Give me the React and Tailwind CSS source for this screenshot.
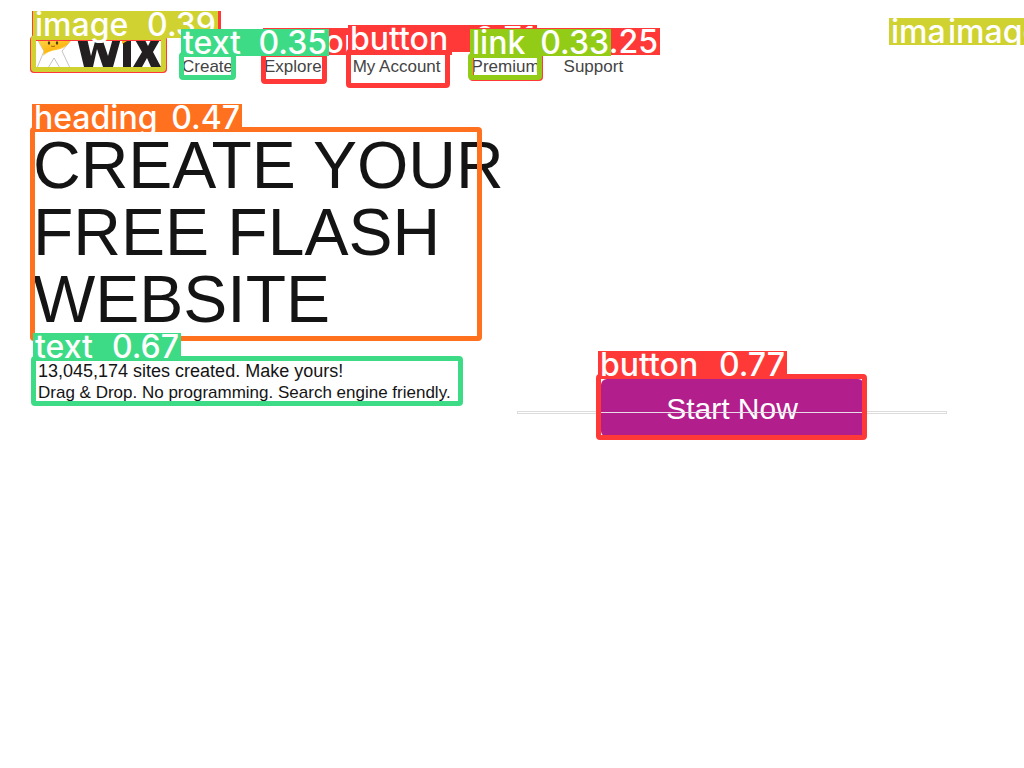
const tones = {
  red: { box: 'border-[#ff3838]', tag: 'bg-[#ff3838]' },
  olive: { box: 'border-[#cfd231]', tag: 'bg-[#cfd231]' },
  mint: { box: 'border-[#3ddb86]', tag: 'bg-[#3ddb86]' },
  lime: { box: 'border-[#92cc17]', tag: 'bg-[#92cc17]' },
  orange: { box: 'border-[#ff701f]', tag: 'bg-[#ff701f]' },
};

const detections = [
  { tone: 'red', box: 'left-[30px] top-[36px] w-[137px] h-[37px]', tag: 'left-[32px] top-[11px] w-[189px]' },
  { name: 'image', score: '0.39', tone: 'olive', box: 'left-[31px] top-[35px] w-[135px] h-[37px]', tag: 'left-[33px] top-[11px] w-[185px]' },
  { name: 'button', tone: 'red', box: 'left-[261px] top-[52px] w-[66px] h-[32px]', tag: 'left-[263px] top-[28px] w-[189px]' },
  { name: 'text', score: '0.35', tone: 'mint', box: 'left-[179px] top-[52px] w-[57px] h-[28px]', tag: 'left-[181px] top-[29px] w-[148px]' },
  { name: 'button', score: '0.71', tone: 'red', box: 'left-[346px] top-[49px] w-[104px] h-[39px]', tag: 'left-[348px] top-[25px] w-[189px]' },
  { name: 'button', score: '0.25', tone: 'red', box: 'left-[469px] top-[53px] w-[74px] h-[28px]', tag: 'left-[471px] top-[28px] w-[189px]' },
  { name: 'link', score: '0.33', tone: 'lime', box: 'left-[468px] top-[53px] w-[74px] h-[27px]', tag: 'left-[470px] top-[29px] w-[141px]' },
  { name: 'image', tone: 'olive', tag: 'left-[889px] top-[18px] w-[135px]' },
  { name: 'image', tone: 'olive', tag: 'left-[946px] top-[18px] w-[135px]' },
  { name: 'heading', score: '0.47', tone: 'orange', box: 'left-[30px] top-[127px] w-[452px] h-[214px]', tag: 'left-[32px] top-[104px] w-[210px]' },
  { name: 'text', score: '0.67', tone: 'mint', box: 'left-[31px] top-[356px] w-[432px] h-[50px]', tag: 'left-[33px] top-[333px] w-[148px]' },
  { name: 'button', score: '0.77', tone: 'red', box: 'left-[596px] top-[374px] w-[271px] h-[66px]', tag: 'left-[598px] top-[351px] w-[189px]' },
];

function Detection({ name, score, tone, box, tag }) {
  return (
    <>
      {box && <div className={`absolute rounded border-[5px] ${tones[tone].box} ${box}`} />}
      <div
        className={`absolute flex h-[27px] items-center justify-between px-[2px] font-[Inter,sans-serif] text-[32px] leading-[27px] font-medium whitespace-nowrap text-white ${tones[tone].tag} ${tag}`}
      >
        {name && <span>{name}</span>}
        {score && <span>{score}</span>}
      </div>
    </>
  );
}

function Logo() {
  return (
    <svg viewBox="0 0 126 34" className="h-[34px] w-[126px]" role="img" aria-label="Wix">
      <defs>
        <linearGradient id="sun" gradientUnits="userSpaceOnUse" x1="15" y1="0" x2="21" y2="17">
          <stop offset="0" stopColor="#fdd54a" />
          <stop offset="0.75" stopColor="#fdb913" />
          <stop offset="1" stopColor="#fee08a" />
        </linearGradient>
      </defs>
      <path d="M2 3H37L27 15L35 32H25L19 22L13 32H2L9 15Z" fill="#fff" stroke="#aaa" strokeWidth="0.7" />
      <path d="M2 3H37L33 8Q29 13 21 14Q13 15 8 20L9 15Z" fill="url(#sun)" />
      <ellipse cx="14" cy="7" rx="1.2" ry="1.7" fill="#4d3a12" />
      <ellipse cx="22" cy="7" rx="1.2" ry="1.7" fill="#4d3a12" />
      <path d="M16 10Q18 11 20 10" fill="none" stroke="#9b6513" />
      <path d="M42 2H52L56 20L61 2H67L73 20L78 2H86L78 31H68L62 13L58 31H49Z" fill="#231f20" />
      <path d="M88 2H96V31H88Z" fill="#231f20" />
      <path d="M87 2H97L87 8Z" fill="#fdb913" />
      <path d="M99 2H109L113 10L117 2H126L118 16L126 31H116L112 22L107 31H98L107 16Z" fill="#231f20" />
    </svg>
  );
}

export default function App() {
  return (
    <div className="relative min-h-screen overflow-hidden bg-white font-['Liberation_Sans',Arial,sans-serif] text-[#141414]">
      <header className="flex items-start gap-[21px] pt-9 pl-[35px]">
        <a href="#home"><Logo /></a>
        <nav className="flex gap-[31px] pt-[21px] text-[17px] leading-5 text-[#444]">
          <a href="#create">Create</a>
          <a href="#explore">Explore</a>
          <a href="#account">My Account</a>
          <div className="flex gap-6">
            <a href="#premium">Premium</a>
            <a href="#support">Support</a>
          </div>
        </nav>
      </header>

      <main className="grid grid-cols-2 pt-[55px]">
        <section className="pl-[33px]">
          <h1 className="text-[66px] leading-[67px] whitespace-nowrap">
            CREATE YOUR<br />FREE FLASH<br />WEBSITE
          </h1>
          <div className="pt-7 pl-[5px] whitespace-nowrap">
            <p className="text-[18px] leading-[21px]">13,045,174 sites created. Make yours!</p>
            <p className="text-[17px] leading-[21px]">Drag &amp; Drop. No programming. Search engine friendly.</p>
          </div>
        </section>
        <section className="pt-[247px] pr-[77px] pl-[5px]">
          <div className="relative flex justify-center">
            <div className="absolute inset-x-0 top-8 h-[3px] border border-[#dcdcdc] bg-white" />
            <button className="relative h-[58px] w-[263px] rounded-md bg-[#b31e8d] text-[30px] text-white">
              Start Now
              <span className="absolute inset-x-0 top-[33px] h-px bg-[#eadce7]" />
            </button>
          </div>
        </section>
      </main>

      <div className="pointer-events-none absolute inset-0 overflow-hidden">
        {detections.map((item, index) => (
          <Detection key={index} {...item} />
        ))}
      </div>
    </div>
  );
}
